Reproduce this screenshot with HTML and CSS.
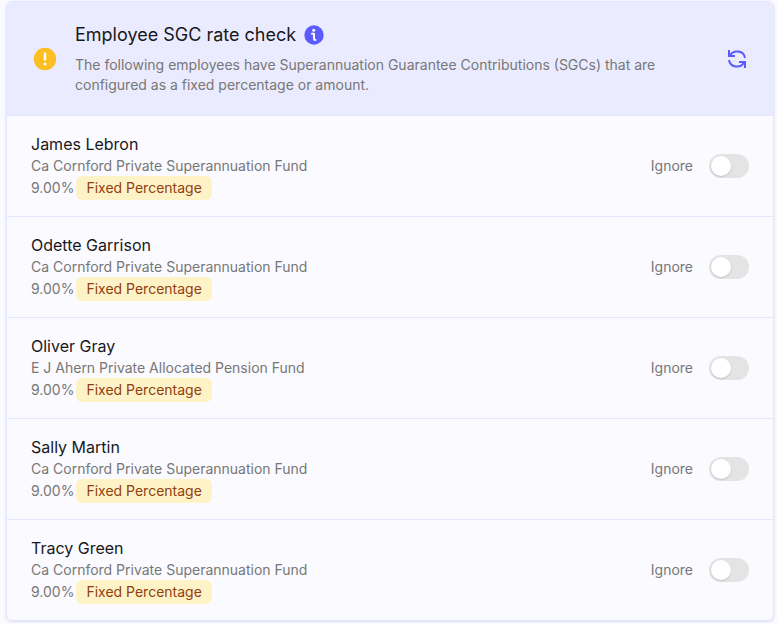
FILE: index.html
```html
<!DOCTYPE html>
<html lang="en">
<head>
    <meta charset="UTF-8">
    <meta name="viewport" content="width=device-width, initial-scale=1.0">
    <title>Employee SGC rate check</title>
    <link rel="stylesheet" href="styles.css">
</head>
<body>

    <main class="card">
        <header class="card-header">
            <svg class="warning-icon" viewBox="0 0 24 24" aria-hidden="true">
                <circle cx="12" cy="12" r="11.2" fill="#fbbf24"/>
                <path d="M12 6.4v6" stroke="#fff" stroke-width="2.4" stroke-linecap="round"/>
                <circle cx="12" cy="17" r="1.5" fill="#fff"/>
            </svg>
            <div class="header-text">
                <div class="title-row">
                    <h1>Employee SGC rate check</h1>
                    <button class="icon-button" type="button" aria-label="More information">
                        <svg class="info-icon" viewBox="0 0 20 20" aria-hidden="true">
                            <circle cx="10" cy="10" r="9.7" fill="#5b5bff"/>
                            <circle cx="9.7" cy="5.3" r="1.5" fill="#fff"/>
                            <path d="M8 8.8h2v5q0 1.2 1.4 1.2" fill="none" stroke="#fff" stroke-width="2" stroke-linecap="round" stroke-linejoin="round"/>
                        </svg>
                    </button>
                </div>
                <p>The following employees have Superannuation Guarantee Contributions (SGCs) that are configured as a fixed percentage or amount.</p>
            </div>
            <button class="icon-button" type="button" aria-label="Refresh">
                <svg class="refresh-icon" viewBox="0 0 20 20" aria-hidden="true">
                    <path d="M2 1v6h6M3 6.5A8 7.6 0 0 1 18 9M18 19v-6h-6M17 13.5A8 7.6 0 0 1 2 11" fill="none" stroke="#5b5bff" stroke-width="2"/>
                </svg>
            </button>
        </header>

        <ul class="employee-list">
            <li class="employee">
                <div class="details">
                    <h2>James Lebron</h2>
                    <p>Ca Cornford Private Superannuation Fund</p>
                    <div class="rate">9.00% <span class="badge">Fixed Percentage</span></div>
                </div>
                <label class="ignore">Ignore <input class="toggle" type="checkbox" role="switch"></label>
            </li>
            <li class="employee">
                <div class="details">
                    <h2>Odette Garrison</h2>
                    <p>Ca Cornford Private Superannuation Fund</p>
                    <div class="rate">9.00% <span class="badge">Fixed Percentage</span></div>
                </div>
                <label class="ignore">Ignore <input class="toggle" type="checkbox" role="switch"></label>
            </li>
            <li class="employee">
                <div class="details">
                    <h2>Oliver Gray</h2>
                    <p>E J Ahern Private Allocated Pension Fund</p>
                    <div class="rate">9.00% <span class="badge">Fixed Percentage</span></div>
                </div>
                <label class="ignore">Ignore <input class="toggle" type="checkbox" role="switch"></label>
            </li>
            <li class="employee">
                <div class="details">
                    <h2>Sally Martin</h2>
                    <p>Ca Cornford Private Superannuation Fund</p>
                    <div class="rate">9.00% <span class="badge">Fixed Percentage</span></div>
                </div>
                <label class="ignore">Ignore <input class="toggle" type="checkbox" role="switch"></label>
            </li>
            <li class="employee">
                <div class="details">
                    <h2>Tracy Green</h2>
                    <p>Ca Cornford Private Superannuation Fund</p>
                    <div class="rate">9.00% <span class="badge">Fixed Percentage</span></div>
                </div>
                <label class="ignore">Ignore <input class="toggle" type="checkbox" role="switch"></label>
            </li>
        </ul>
    </main>

</body>
</html>
```
FILE: styles.css
```css
* {
    box-sizing: border-box;
}

body {
    margin: 0;
    padding: 1px 3px 2px 6px;
    background-color: #fafaff;
    color: #777;
    font-family: Inter, sans-serif;
    font-size: 14px;
    line-height: 20px;
}

h1, h2, p, ul {
    margin: 0;
    padding: 0;
}

.card {
    border: 1px solid #e0e7ff;
    border-radius: 6px;
    box-shadow: 0 1px 3px rgba(60, 60, 160, 0.15);
    overflow: hidden;
}

.card-header {
    display: flex;
    align-items: center;
    gap: 18px;
    padding: 20px 26px;
    background-color: #ebebff;
}

.warning-icon {
    width: 24px;
    height: 24px;
    flex-shrink: 0;
}

.header-text {
    flex: 1;
}

.header-text p {
    max-width: 600px;
}

.title-row {
    display: flex;
    align-items: center;
    gap: 8px;
    margin-bottom: 7px;
}

.title-row h1 {
    color: #18181b;
    font-size: 18px;
    font-weight: 400;
    line-height: 26px;
}

.icon-button {
    display: flex;
    padding: 0;
    border: none;
    background: none;
    cursor: pointer;
}

.info-icon {
    width: 20px;
    height: 20px;
}

.refresh-icon {
    width: 20px;
    height: 20px;
}

.employee-list {
    list-style: none;
}

.employee {
    display: flex;
    align-items: center;
    justify-content: space-between;
    padding: 16px 24px;
    border-top: 1px solid #e0e7ff;
}

.employee h2 {
    color: #18181b;
    font-size: 16px;
    font-weight: 400;
    line-height: 24px;
}

.rate {
    display: flex;
    align-items: center;
    gap: 2px;
}

.badge {
    padding: 2px 10px;
    border-radius: 6px;
    background-color: #fef3c7;
    color: #92400e;
}

.ignore {
    display: flex;
    align-items: center;
    gap: 16px;
    cursor: pointer;
}

.toggle {
    appearance: none;
    display: flex;
    align-items: center;
    width: 40px;
    height: 24px;
    margin: 0;
    padding: 0 2px;
    border-radius: 12px;
    background-color: #e4e4e4;
    cursor: pointer;
}

.toggle::before {
    content: "";
    width: 20px;
    height: 20px;
    border-radius: 50%;
    background-color: #fff;
    box-shadow: 0 1px 2px rgba(0, 0, 0, 0.15);
}

.toggle:checked {
    justify-content: flex-end;
    background-color: #5b5bff;
}
```
